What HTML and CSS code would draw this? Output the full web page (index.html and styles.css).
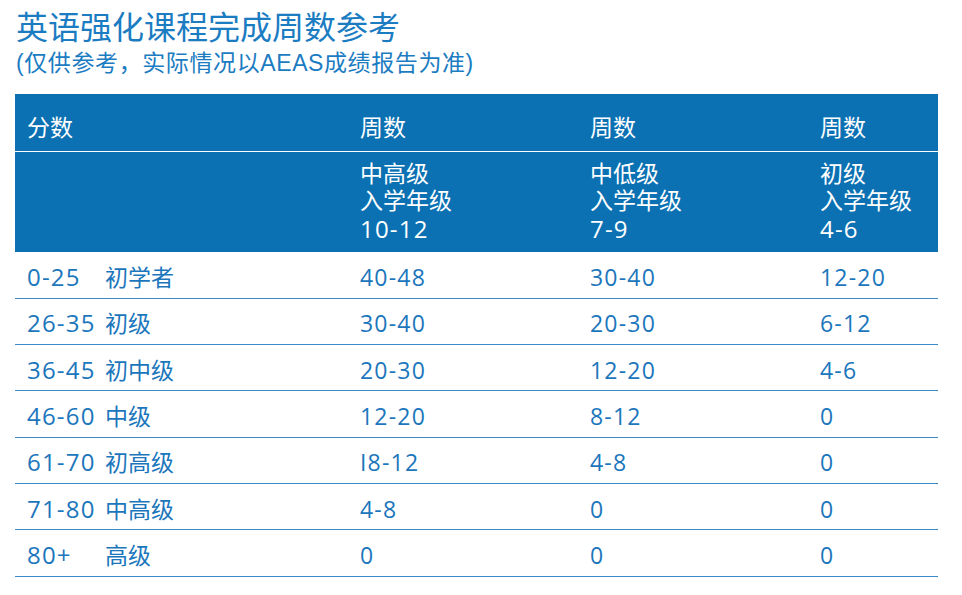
FILE: index.html
```html
<!DOCTYPE html>
<html lang="zh-CN">
<head>
<meta charset="utf-8">
<title>英语强化课程完成周数参考</title>
<link rel="stylesheet" href="styles.css">
</head>
<body>
<div class="page">
  <h1 class="title">英语强化课程完成周数参考</h1>
  <p class="subtitle">(仅供参考，实际情况以AEAS成绩报告为准)</p>
  <table class="weeks">
    <colgroup>
      <col class="c1"><col class="c2"><col class="c3"><col class="c4">
    </colgroup>
    <thead>
      <tr class="h1row">
        <th>分数</th><th>周数</th><th>周数</th><th>周数</th>
      </tr>
      <tr class="h2row">
        <th></th>
        <th>中高级<br>入学年级<br><span class="num">10-12</span></th>
        <th>中低级<br>入学年级<br><span class="num">7-9</span></th>
        <th>初级<br>入学年级<br><span class="num">4-6</span></th>
      </tr>
    </thead>
    <tbody>
      <tr><td><span class="score">0-25</span>初学者</td><td class="num">40-48</td><td class="num">30-40</td><td class="num">12-20</td></tr>
      <tr><td><span class="score">26-35</span>初级</td><td class="num">30-40</td><td class="num">20-30</td><td class="num">6-12</td></tr>
      <tr><td><span class="score">36-45</span>初中级</td><td class="num">20-30</td><td class="num">12-20</td><td class="num">4-6</td></tr>
      <tr><td><span class="score">46-60</span>中级</td><td class="num">12-20</td><td class="num">8-12</td><td class="num">0</td></tr>
      <tr><td><span class="score">61-70</span>初高级</td><td class="num">I8-12</td><td class="num">4-8</td><td class="num">0</td></tr>
      <tr><td><span class="score">71-80</span>中高级</td><td class="num">4-8</td><td class="num">0</td><td class="num">0</td></tr>
      <tr><td><span class="score">80+</span>高级</td><td class="num">0</td><td class="num">0</td><td class="num">0</td></tr>
    </tbody>
  </table>
</div>
</body>
</html>
```
FILE: styles.css
```css
html, body {
  margin: 0;
  padding: 0;
  background: #ffffff;
}
body {
  font-family: "Liberation Sans", "Noto Sans CJK SC", sans-serif;
  color: #1c76bc;
}
.page {
  padding: 9px 24px 0 15px;
}
.title {
  margin: 0 0 2px 1px;
  font-size: 32px;
  line-height: 38px;
  font-weight: normal;
  color: #1b7cc2;
}
.subtitle {
  margin: 0 0 17px 1px;
  font-size: 23px;
  line-height: 28px;
  letter-spacing: 0.6px;
  color: #1b7cc2;
}
.weeks {
  width: 923px;
  border-collapse: collapse;
  table-layout: fixed;
}
.c1 { width: 333px; }
.c2 { width: 230px; }
.c3 { width: 230px; }
.c4 { width: 130px; }
.weeks th {
  background: #0b71b3;
  color: #ffffff;
  font-weight: normal;
  text-align: left;
  font-size: 23px;
  line-height: 27px;
  padding: 0 0 0 12px;
}
.h1row th {
  height: 57px;
  box-sizing: border-box;
  vertical-align: bottom;
  padding-bottom: 9px;
  border-bottom: 1px solid #ffffff;
}
.h2row th {
  height: 101px;
  box-sizing: border-box;
  vertical-align: middle;
  padding-top: 2px;
}
.weeks td {
  height: 46.3px;
  box-sizing: border-box;
  padding: 5px 0 0 12px;
  font-size: 23px;
  line-height: 27px;
  vertical-align: middle;
  border-bottom: 1px solid #3a8bc8;
  white-space: nowrap;
}
.num, .score {
  font-family: "Open Sans", "Noto Sans CJK SC", sans-serif;
  font-size: 24px;
  letter-spacing: 1.2px;
}
.score {
  display: inline-block;
  width: 78px;
}
```
